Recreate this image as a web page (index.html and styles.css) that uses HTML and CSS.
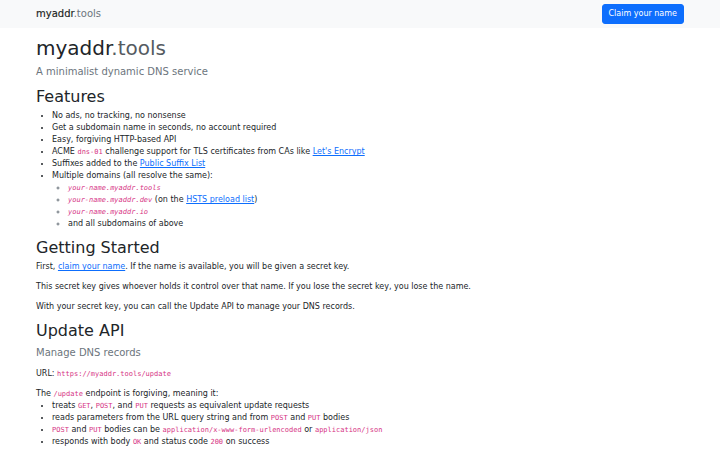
FILE: index.html
```html
<!DOCTYPE html>
<html lang="en">
<head>
    <meta charset="UTF-8">
    <meta name="viewport" content="width=device-width, initial-scale=1.0">
    <title>myaddr.tools</title>
    <link rel="stylesheet" href="styles.css">
</head>
<body>
    <nav class="navbar">
        <div class="container nav-inner">
            <a class="brand" href="#"><span class="brand-name">myaddr</span><span class="brand-tld">.tools</span></a>
            <a class="btn-primary" href="#">Claim your name</a>
        </div>
    </nav>

    <main class="container">
        <h1><span>myaddr</span><span class="tld">.tools</span></h1>
        <p class="lead">A minimalist dynamic DNS service</p>

        <h2>Features</h2>
        <ul>
            <li>No ads, no tracking, no nonsense</li>
            <li>Get a subdomain name in seconds, no account required</li>
            <li>Easy, forgiving HTTP-based API</li>
            <li>ACME <code>dns-01</code> challenge support for TLS certificates from CAs like <a href="#">Let's Encrypt</a></li>
            <li>Suffixes added to the <a href="#">Public Suffix List</a></li>
            <li>Multiple domains (all resolve the same):
                <ul>
                    <li><em><code>your-name.myaddr.tools</code></em></li>
                    <li><em><code>your-name.myaddr.dev</code></em> (on the <a href="#">HSTS preload list</a>)</li>
                    <li><em><code>your-name.myaddr.io</code></em></li>
                    <li>and all subdomains of above</li>
                </ul>
            </li>
        </ul>

        <h2>Getting Started</h2>
        <p>First, <a href="#">claim your name</a>. If the name is available, you will be given a secret key.</p>
        <p>This secret key gives whoever holds it control over that name. If you lose the secret key, you lose the name.</p>
        <p>With your secret key, you can call the Update API to manage your DNS records.</p>

        <h2>Update API</h2>
        <p class="lead">Manage DNS records</p>
        <p>URL: <code>https://myaddr.tools/update</code></p>
        <p class="flush">The <code>/update</code> endpoint is forgiving, meaning it:</p>
        <ul>
            <li>treats <code>GET</code>, <code>POST</code>, and <code>PUT</code> requests as equivalent update requests</li>
            <li>reads parameters from the URL query string and from <code>POST</code> and <code>PUT</code> bodies</li>
            <li><code>POST</code> and <code>PUT</code> bodies can be <code>application/x-www-form-urlencoded</code> or <code>application/json</code></li>
            <li>responds with body <code>OK</code> and status code <code>200</code> on success</li>
        </ul>
    </main>
</body>
</html>
```

FILE: styles.css
```css
body {
    margin: 0;
    font-family: "DejaVu Sans", "Noto Sans", sans-serif;
    font-size: 8px;
    line-height: 12px;
    color: #212529;
    background: #fff;
}

.container {
    max-width: 648px;
    margin: 0 auto;
    padding: 0 36px;
}

.navbar {
    background: #f8f9fa;
    height: 28px;
}

.nav-inner {
    height: 28px;
    display: flex;
    align-items: center;
    justify-content: space-between;
}

.brand {
    font-size: 10px;
    color: #1a1d20;
    text-decoration: none;
    -webkit-text-stroke: 0.15px #1a1d20;
}

.brand-tld {
    color: #6c757d;
    -webkit-text-stroke: 0;
}

.btn-primary {
    background: #0d6efd;
    color: #fff;
    text-decoration: none;
    font-size: 8px;
    line-height: 12px;
    padding: 3px 6px;
    border-radius: 3px;
    border: 0.5px solid #0d6efd;
}

main.container {
    padding-top: 8px;
}

h1, h2 {
    font-weight: 400;
    margin: 0 0 4px;
    line-height: 1.2;
}

h1 {
    font-size: 20px;
}

h1 .tld {
    color: #555b61;
}

h2 {
    font-size: 16px;
}

p {
    margin: 0 0 8px;
}

p.flush {
    margin-bottom: 0;
}

.lead {
    font-size: 10px;
    line-height: 15px;
    color: #6c757d;
}

ul {
    margin: 0 0 8px;
    padding-left: 16px;
}

ul ul {
    margin: 0;
    list-style-type: circle;
}

ul ul li::marker {
    color: #6c757d;
}

code {
    font-family: "DejaVu Sans Mono", "Liberation Mono", monospace;
    font-size: 7px;
    color: #d63384;
}

a {
    color: #0d6efd;
}
```
